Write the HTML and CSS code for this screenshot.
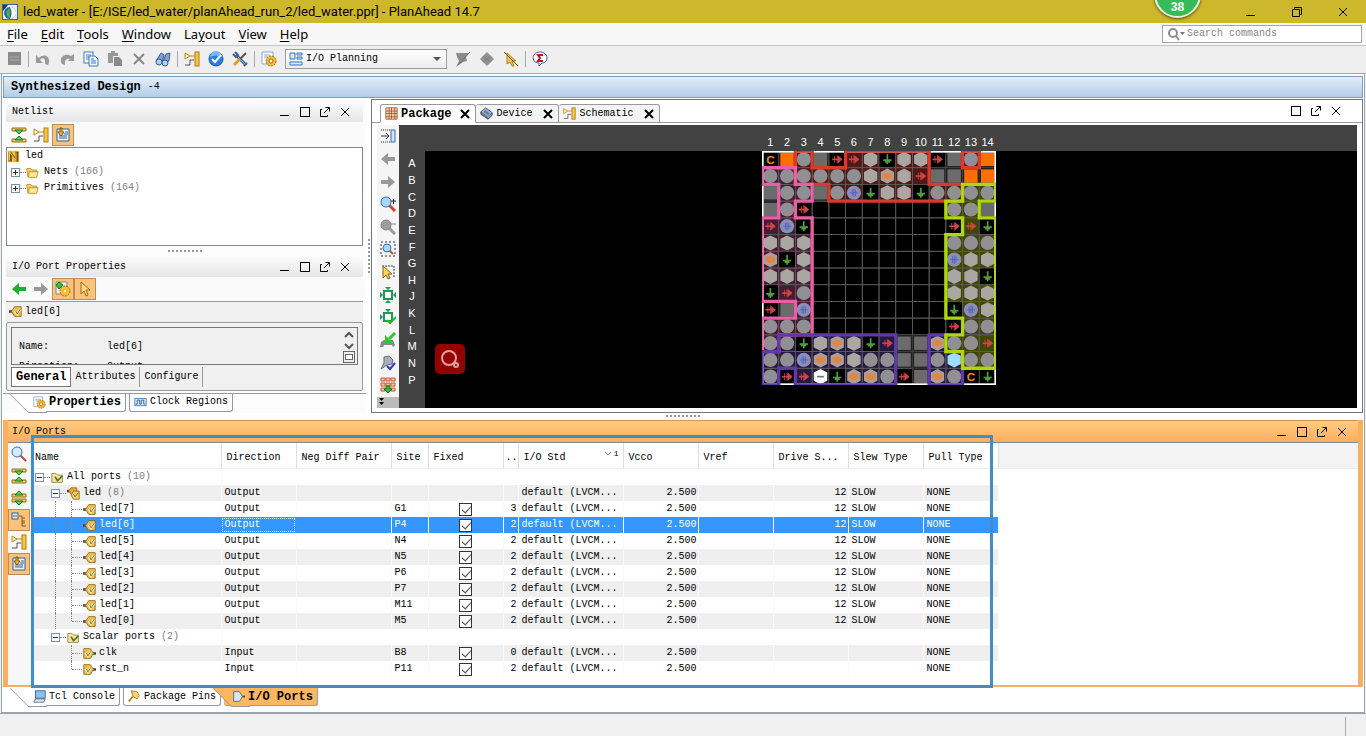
FILE: index.html
```html
<!DOCTYPE html>
<html lang="en">
<head>
  <meta charset="UTF-8">
  <title>led_water - PlanAhead 14.7</title>
  <link rel="stylesheet" href="styles.css">
</head>
<body>

<svg class="sprite" aria-hidden="true">
  <symbol id="i-app" viewBox="0 0 16 16"><rect width="16" height="16" fill="#3b62b5"/><rect x="1" y="1" width="14" height="14" fill="#e9f0fa"/><circle cx="8" cy="9" r="6" fill="#2a62b8"/><path d="M8 3a6 6 0 0 1 0 12c2-4 2-8 0-12z" fill="#fff"/><path d="M8 4c-5 2-5 8 0 10z" fill="#47b04b"/><path d="M1 1h5L1 7z" fill="#1b3670"/></symbol>
  <symbol id="i-save" viewBox="0 0 16 16"><rect x="2" y="1" width="13" height="13" fill="#8b8b8b"/><path d="M4 6h9M4 9h9" stroke="#a9a9a9"/></symbol>
  <symbol id="i-undo" viewBox="0 0 16 16"><path d="M1 4v8h7L5 9c2-3 6-2 5 4l3 1c4-7-3-13-9-7z" fill="#9a9a9a"/></symbol>
  <symbol id="i-redo" viewBox="0 0 16 16"><path d="M15 3v7H9l2-2c-3-1-6 1-5 6l-3-1C-1 7 6 1 12 5z" fill="#9a9a9a"/></symbol>
  <symbol id="i-copy" viewBox="0 0 16 16"><rect x="1" y="1" width="9" height="11" fill="#fff" stroke="#3d7cc0"/><path d="M3 4h5M3 6h5M3 8h5" stroke="#3d7cc0"/><path d="M6 5h6l3 3v7H6z" fill="#eef6ff" stroke="#3d7cc0"/><path d="M8 8h3M8 10h5M8 12h5" stroke="#3d7cc0"/></symbol>
  <symbol id="i-paste" viewBox="0 0 16 16"><path d="M1 2h3V0h4v2h3v3H6v7H1z" fill="#989898"/><path d="M7 6h5l3 3v6H7z" fill="#8a8a8a"/></symbol>
  <symbol id="i-delete" viewBox="0 0 16 16"><path d="M3 3l10 10M13 3L3 13" stroke="#888" stroke-width="2"/></symbol>
  <symbol id="i-find" viewBox="0 0 16 16"><path d="M1 10l5-8 3 2-2 8zM8 11l3-8 4-1-1 8z" fill="#7ea4cf" stroke="#385f93"/><circle cx="4" cy="11" r="3" fill="#a8d2ef" stroke="#385f93"/><circle cx="10" cy="12" r="3" fill="#a8d2ef" stroke="#385f93"/></symbol>
  <symbol id="i-schem" viewBox="0 0 16 16"><path d="M1 2l5 3-5 3zM6 5h5" fill="#fff3c4" stroke="#c48a17"/><path d="M1 14h5V9h4" fill="none" stroke="#555"/><rect x="11" y="1" width="4" height="14" fill="#f7c640" stroke="#b07a10"/></symbol>
  <symbol id="i-check" viewBox="0 0 16 16"><circle cx="8" cy="8" r="7" fill="#2a7fe0" stroke="#155aa8"/><path d="M2 6a6 6 0 0 1 12 0q-6-3-12 0" fill="#7ab6f4"/><path d="M4 8l3 3 6-7" fill="none" stroke="#fff" stroke-width="2"/></symbol>
  <symbol id="i-tools" viewBox="0 0 16 16"><path d="M4 4l9 9" stroke="#38618f" stroke-width="3"/><path d="M4 4l9 9" stroke="#8fc0ea"/><path d="M1 3l3 3 2-2-3-3M12 15l3-3" fill="none" stroke="#38618f" stroke-width="2"/><path d="M14 2L8 8" stroke="#555" stroke-width="2"/><path d="M8 8l-6 6" stroke="#e99b1c" stroke-width="3"/></symbol>
  <symbol id="i-gear" viewBox="0 0 16 16"><path d="M1 1h11v12H1z" fill="#fff" stroke="#8aa6c8"/><path d="M3 4h6M3 6h4" stroke="#8aa6c8"/><circle cx="10" cy="10" r="5" fill="#f4bd34"/><circle cx="10" cy="10" r="5" fill="none" stroke="#a26c0b" stroke-dasharray="2 1"/><circle cx="10" cy="10" r="2" fill="#fff" stroke="#a26c0b"/></symbol>
  <symbol id="i-prop" viewBox="0 0 16 16"><path d="M1 1h11v12H1z" fill="#eef" stroke="#888"/><path d="M1 4l3-3 4 3-4 4z" fill="#3ac23a" stroke="#14741a"/><circle cx="10" cy="10" r="5" fill="#f4bd34" stroke="#a26c0b" stroke-dasharray="2 1"/><circle cx="10" cy="10" r="1" fill="#fff"/></symbol>
  <symbol id="i-layout" viewBox="0 0 16 16"><path d="M2 2h5v6H2zM9 2h5v2H9zM9 6h5v2H9zM2 11h12v3H2z" fill="#dcebfa" stroke="#3974b8"/></symbol>
  <symbol id="i-leaf" viewBox="0 0 16 16"><path d="M1 2h13l-3 4 1 4-4 1-7 5 3-6-2-4z" fill="#8c8c8c"/><path d="M15 1L3 14" stroke="#6d6d6d"/></symbol>
  <symbol id="i-diamond" viewBox="0 0 16 16"><path d="M8 1l7 7-7 7-7-7z" fill="#929292"/><path d="M4 5l8 6M12 5l-8 6" stroke="#7c7c7c"/></symbol>
  <symbol id="i-nocursor" viewBox="0 0 16 16"><path d="M4 2l9 8-4 0 2 5-2 0-2-4-3 2z" fill="#f6c34f" stroke="#b07f22"/><path d="M1 1l14 14" stroke="#6d5520"/></symbol>
  <symbol id="i-sigma" viewBox="0 0 16 16"><path d="M8 1c9 0 9 11 2 11l-3 3v-3C-1 12-1 1 8 1z" fill="#fff" stroke="#4359b0"/><path d="M11 4H6l2 3-2 3h5" fill="none" stroke="#c8102e" stroke-width="2"/></symbol>
  <symbol id="i-collapse" viewBox="0 0 16 16"><path d="M1 1h14v3H1zM1 12h14v3H1z" fill="#f5cb5c" stroke="#94701c"/><path d="M4 3h8L8 7zM4 13h8L8 9z" fill="#5fd25f" stroke="#14741a"/></symbol>
  <symbol id="i-expand" viewBox="0 0 16 16"><path d="M1 4h14v3H1zM1 9h14v3H1z" fill="#f5cb5c" stroke="#94701c"/><path d="M4 5h8L8 1zM4 11h8l-4 4z" fill="#5fd25f" stroke="#14741a"/></symbol>
  <symbol id="i-sheet" viewBox="0 0 16 16"><path d="M2 2h12v12H2z" fill="#e6f2ff" stroke="#35618f"/><path d="M10 5h3M4 9h8M4 11h8M9 7h4" stroke="#35618f"/><path d="M5 1h2v4h2L6 9 3 5h2z" fill="#f4b52c" stroke="#7b5510"/></symbol>
  <symbol id="i-tree" viewBox="0 0 16 16"><rect x="1" y="1" width="6" height="6" fill="#dfeefe" stroke="#35618f"/><path d="M2 4h4M8 4h3v10h4M11 6h3M11 9h3M11 11h3" fill="none" stroke="#7b5a1a"/></symbol>
  <symbol id="i-netlist" viewBox="0 0 16 16"><path d="M1 1h14v14H1z" fill="#efc23c"/><path d="M2 14V2h3l5 7V2h4v12h-3L6 7v7z" fill="#7c5306"/><path d="M3 13V2l8 11V3" fill="none" stroke="#ffe48a"/></symbol>
  <symbol id="i-folder" viewBox="0 0 16 16"><path d="M1 3h5l2 2h5v8H2z" fill="#f4cf66" stroke="#b98a1d"/><path d="M4 7h11l-2 7H3z" fill="#ffe89f" stroke="#b98a1d"/></symbol>
  <symbol id="i-pfolder" viewBox="0 0 16 16"><path d="M1 3h5l2 2h6v9H1z" fill="#f6e6a6" stroke="#8a7a3a"/><path d="M5 7l3 5 6-6" fill="none" stroke="#5d6a1c" stroke-width="2"/></symbol>
  <symbol id="i-out" viewBox="0 0 16 16"><path d="M0 8h4" stroke="#444" stroke-width="3"/><path d="M3 8l4-6h8v12H7z" fill="#f0bd4a" stroke="#8a6210"/><path d="M7 7l3 4 4-6" fill="none" stroke="#fff6cf" stroke-width="3"/><path d="M8 7l2 4 4-6" fill="none" stroke="#6d4c05"/></symbol>
  <symbol id="i-in" viewBox="0 0 16 16"><path d="M12 8h4" stroke="#444" stroke-width="3"/><path d="M13 8L9 2H1v12h8z" fill="#f0bd4a" stroke="#8a6210"/><path d="M3 7l3 4 4-6" fill="none" stroke="#fff6cf" stroke-width="3"/><path d="M4 7l2 4 4-6" fill="none" stroke="#6d4c05"/></symbol>
  <symbol id="i-bus" viewBox="0 0 16 16"><path d="M0 5h4" stroke="#333" stroke-width="3"/><path d="M2 5l3-4h7v8H5z" fill="#e4ac33" stroke="#8a6210"/><path d="M5 10l3-5h7v10H8z" fill="#f7cf6a" stroke="#8a6210"/><path d="M8 9l2 3 4-5" fill="none" stroke="#6d4c05"/></symbol>
  <symbol id="i-port" viewBox="0 0 16 16"><path d="M11 8h5" stroke="#444" stroke-width="2"/><path d="M13 8L9 2H2v12h7z" fill="#d5e6f7" stroke="#4b5f78"/></symbol>
  <symbol id="i-clock" viewBox="0 0 16 16"><rect x="1" y="3" width="14" height="9" fill="#dcebfa" stroke="#3974b8"/><path d="M2 10h2V5h3v5h2V5h3v5h2" fill="none" stroke="#234f8a"/></symbol>
  <symbol id="i-left" viewBox="0 0 16 16"><path d="M1 8l7-6v4h7v4H8v4z" fill="currentColor"/></symbol>
  <symbol id="i-right" viewBox="0 0 16 16"><path d="M15 8L8 2v4H1v4h7v4z" fill="currentColor"/></symbol>
  <symbol id="i-cursor" viewBox="0 0 16 16"><path d="M4 1l9 8H9l2 5-2 1-2-5-3 3z" fill="#ffd98a" stroke="#a06a10"/></symbol>
  <symbol id="i-area" viewBox="0 0 16 16"><path d="M2 2h12v11" fill="none" stroke="#444" stroke-dasharray="2 1"/><path d="M3 2l9 8H8l2 4-2 1-2-4-3 3z" fill="#ffd35c" stroke="#8a6210"/></symbol>
  <symbol id="i-pkg" viewBox="0 0 16 16"><rect x="1" y="1" width="14" height="14" fill="#f1d2b5"/><path d="M1 1h14v14H1zM1 5h14M1 8h14M1 12h14M5 1v14M8 1v14M12 1v14" fill="none" stroke="#a4542c"/></symbol>
  <symbol id="i-device" viewBox="0 0 16 16"><path d="M1 6l6-5 8 6-5 6z" fill="#9fb4cf" stroke="#40495a"/><path d="M1 6v3l9 6v-2M10 15l5-5V7" fill="#6d7788" stroke="#40495a"/><path d="M4 6l3-2 5 4-2 2z" fill="#5d7fae"/></symbol>
  <symbol id="i-dock" viewBox="0 0 16 16"><path d="M1 2h9M1 14h9" stroke="#333" stroke-dasharray="1 1"/><path d="M1 8h8M6 5l3 3-3 3" fill="none" stroke="#333"/><rect x="11" y="2" width="4" height="12" fill="#cfe2f8" stroke="#3974b8"/></symbol>
  <symbol id="i-zoomin" viewBox="0 0 16 16"><path d="M9 9l6 6" stroke="#c8452e" stroke-width="3"/><circle cx="6" cy="6" r="5" fill="#a9d5f7" stroke="#2e73bd"/><path d="M11 5h5M13.500 3v5" stroke="#222"/></symbol>
  <symbol id="i-zoomout" viewBox="0 0 16 16"><path d="M9 9l6 6" stroke="#999" stroke-width="3"/><circle cx="6" cy="6" r="5" fill="#9d9d9d" stroke="#888"/><path d="M11 5h5" stroke="#888"/></symbol>
  <symbol id="i-zoomfit" viewBox="0 0 16 16"><rect x="1" y="1" width="14" height="14" fill="none" stroke="#334" stroke-dasharray="2 2"/><path d="M9 9l4 4" stroke="#c8452e" stroke-width="2"/><circle cx="7" cy="7" r="4" fill="#a9d5f7" stroke="#2e73bd"/></symbol>
  <symbol id="i-search" viewBox="0 0 16 16"><path d="M9 9l6 6" stroke="#b94a3a" stroke-width="2"/><circle cx="6" cy="6" r="5" fill="#d5ebfb" stroke="#2e73bd"/></symbol>
  <symbol id="i-chip" viewBox="0 0 16 16"><rect x="4" y="4" width="8" height="8" fill="#fff" stroke="#1c9a55" stroke-width="2"/><path d="M5 0h6L8 3zM5 16h6l-3-3zM0 5v6l3-3zM16 5v6l-3-3z" fill="#1c9a55"/></symbol>
  <symbol id="i-chipok" viewBox="0 0 16 16"><rect x="4" y="4" width="8" height="8" fill="#fff" stroke="#1c9a55" stroke-width="2"/><path d="M5 0h6L8 3zM0 5v6l3-3z" fill="#1c9a55"/><path d="M7 11l3 3 6-6" fill="none" stroke="#2eb52e" stroke-width="2"/></symbol>
  <symbol id="i-place" viewBox="0 0 16 16"><path d="M1 10l3-2h9l2 5-2 2-1-2H4l-1 2H0z" fill="#888"/><path d="M15 1L9 7" stroke="#2fc52f" stroke-width="3"/><path d="M5 3v8h8z" fill="#2fc52f"/></symbol>
  <symbol id="i-verify" viewBox="0 0 16 16"><path d="M4 2l5-1 4 4-1 4-5 1-6 4 3-6z" fill="#a9b0bb" stroke="#666e7a"/><path d="M7 11l3 3 5-6" fill="none" stroke="#3038b4" stroke-width="2"/></symbol>
  <symbol id="i-pins" viewBox="0 0 16 16"><path d="M1 1h4v3H1zM6 1h4v3H6zM11 1h4v3h-4zM1 6h4v3H1zM6 6h4v3H6zM11 6h4v3h-4zM1 11h4v3H1zM11 11h4v3h-4z" fill="#f3c5a3" stroke="#c55a35"/><path d="M8 16l-4-4h2V9h4v3h2z" fill="#2fb52f" stroke="#14741a"/></symbol>
  <symbol id="i-console" viewBox="0 0 16 16"><rect x="3" y="1" width="12" height="9" fill="#8fc0ef" stroke="#28598f"/><path d="M3 11h12l-2 4H1z" fill="#dfe8f2" stroke="#4b5f78"/></symbol>
  <symbol id="i-pinmag" viewBox="0 0 16 16"><path d="M6 8l-5 6" stroke="#b57a17" stroke-width="2"/><path d="M4 1l7 1 3 5-3 4-5-3z" fill="#ffd071" stroke="#a4701a"/></symbol>
  <symbol id="w-min" viewBox="0 0 12 12"><path d="M1 9.500h9" stroke="currentColor"/></symbol>
  <symbol id="w-max" viewBox="0 0 12 12"><rect x="1.500" y="1.500" width="9" height="9" fill="none" stroke="currentColor"/></symbol>
  <symbol id="w-float" viewBox="0 0 12 12"><path d="M3 3.500H1.500v7h7V9M5 7l5-5M6.500 1.500h4v4" fill="none" stroke="currentColor"/></symbol>
  <symbol id="w-close" viewBox="0 0 12 12"><path d="M2 2l8 8M10 2l-8 8" stroke="currentColor"/></symbol>
  <symbol id="w-restore" viewBox="0 0 12 12"><path d="M1.500 3.500h7v7h-7zM3.500 3.500v-2h7v7h-2" fill="none" stroke="currentColor"/></symbol>
</svg>

<header class="titlebar">
  <svg class="icon"><use href="#i-app"/></svg>
  <h1>led_water - [E:/ISE/led_water/planAhead_run_2/led_water.ppr] - PlanAhead 14.7</h1>
  <button aria-label="Minimize"><svg class="glyph"><use href="#w-min"/></svg></button>
  <button aria-label="Restore"><svg class="glyph"><use href="#w-restore"/></svg></button>
  <button aria-label="Close"><svg class="glyph"><use href="#w-close"/></svg></button>
  <div class="ball">38</div>
</header>

<nav class="menubar">
  <button><u>F</u>ile</button>
  <button><u>E</u>dit</button>
  <button><u>T</u>ools</button>
  <button><u>W</u>indow</button>
  <button>La<u>y</u>out</button>
  <button><u>V</u>iew</button>
  <button><u>H</u>elp</button>
  <label class="search">
    <svg viewBox="0 0 20 14" width="20" height="14"><circle cx="6" cy="6" r="4" fill="none" stroke="#8d8d8d" stroke-width="2"/><path d="M9 9l3 4" stroke="#8d8d8d" stroke-width="2"/><path d="M13 5h5l-2.500 3z" fill="#777"/></svg>
    <input type="text" placeholder="Search commands" aria-label="Search commands">
  </label>
</nav>

<div class="toolbar">
  <button class="tool" aria-label="Save"><svg class="icon"><use href="#i-save"/></svg></button>
  <span class="sep"></span>
  <button class="tool" aria-label="Undo"><svg class="icon"><use href="#i-undo"/></svg></button>
  <button class="tool" aria-label="Redo"><svg class="icon"><use href="#i-redo"/></svg></button>
  <button class="tool" aria-label="Copy"><svg class="icon"><use href="#i-copy"/></svg></button>
  <button class="tool" aria-label="Paste"><svg class="icon"><use href="#i-paste"/></svg></button>
  <button class="tool" aria-label="Delete"><svg class="icon"><use href="#i-delete"/></svg></button>
  <button class="tool" aria-label="Find"><svg class="icon"><use href="#i-find"/></svg></button>
  <span class="sep"></span>
  <button class="tool" aria-label="Schematic"><svg class="icon"><use href="#i-schem"/></svg></button>
  <button class="tool" aria-label="Check"><svg class="icon"><use href="#i-check"/></svg></button>
  <button class="tool" aria-label="Tools"><svg class="icon"><use href="#i-tools"/></svg></button>
  <span class="sep"></span>
  <button class="tool" aria-label="Settings"><svg class="icon"><use href="#i-gear"/></svg></button>
  <label class="layout-pick">
    <svg class="icon"><use href="#i-layout"/></svg>
    <select aria-label="Layout"><option>I/O Planning</option></select>
  </label>
  <button class="tool" aria-label="Highlight"><svg class="icon"><use href="#i-leaf"/></svg></button>
  <button class="tool" aria-label="Mark"><svg class="icon"><use href="#i-diamond"/></svg></button>
  <button class="tool" aria-label="Unselect"><svg class="icon"><use href="#i-nocursor"/></svg></button>
  <span class="sep"></span>
  <button class="tool" aria-label="Summary"><svg class="icon"><use href="#i-sigma"/></svg></button>
</div>

<main class="workspace">
  <div class="design-bar"><h2>Synthesized Design</h2><span>-4</span></div>

  <div class="upper">
    <div class="left">
      <section class="panel netlist">
        <div class="panel-head">
          <h3>Netlist</h3>
          <button aria-label="Minimize"><svg class="glyph"><use href="#w-min"/></svg></button>
          <button aria-label="Maximize"><svg class="glyph"><use href="#w-max"/></svg></button>
          <button aria-label="Float"><svg class="glyph"><use href="#w-float"/></svg></button>
          <button aria-label="Close"><svg class="glyph"><use href="#w-close"/></svg></button>
        </div>
        <div class="panel-tools">
          <button aria-label="Collapse all"><svg class="icon"><use href="#i-collapse"/></svg></button>
          <button aria-label="Schematic"><svg class="icon"><use href="#i-schem"/></svg></button>
          <button class="on" aria-label="Scroll to selected"><svg class="icon"><use href="#i-sheet"/></svg></button>
        </div>
        <ul class="tree">
          <li><svg class="small-icon"><use href="#i-netlist"/></svg>led</li>
          <li class="child"><button class="toggle plus" aria-label="Expand"></button><i class="stub"></i><svg class="small-icon"><use href="#i-folder"/></svg>Nets <em>(166)</em></li>
          <li class="child"><button class="toggle plus" aria-label="Expand"></button><i class="stub"></i><svg class="small-icon"><use href="#i-folder"/></svg>Primitives <em>(164)</em></li>
        </ul>
      </section>

      <div class="grip"></div>

      <section class="panel">
        <div class="panel-head">
          <h3>I/O Port Properties</h3>
          <button aria-label="Minimize"><svg class="glyph"><use href="#w-min"/></svg></button>
          <button aria-label="Maximize"><svg class="glyph"><use href="#w-max"/></svg></button>
          <button aria-label="Float"><svg class="glyph"><use href="#w-float"/></svg></button>
          <button aria-label="Close"><svg class="glyph"><use href="#w-close"/></svg></button>
        </div>
        <div class="panel-tools ruled">
          <button class="go" aria-label="Back"><svg class="icon"><use href="#i-left"/></svg></button>
          <button class="dim" aria-label="Forward"><svg class="icon"><use href="#i-right"/></svg></button>
          <button class="on" aria-label="Auto update"><svg class="icon"><use href="#i-prop"/></svg></button>
          <button class="on" aria-label="Select"><svg class="icon"><use href="#i-cursor"/></svg></button>
        </div>
        <div class="object"><svg class="small-icon"><use href="#i-out"/></svg>led[6]</div>
        <div class="props">
          <div class="props-view">
            <dl>
              <dt>Name:</dt><dd>led[6]</dd>
              <dt>Direction:</dt><dd>Output</dd>
            </dl>
            <div class="scroller">
              <svg viewBox="0 0 14 34" width="14" height="34"><path d="M3 8l4-4 4 4M3 15l4 4 4-4" fill="none" stroke="#555" stroke-width="2"/><rect x="1.500" y="22.500" width="11" height="11" fill="#eee" stroke="#666"/><rect x="3.500" y="25.500" width="7" height="5" fill="#fff" stroke="#666"/></svg>
            </div>
          </div>
          <div class="subtabs">
            <button class="active">General</button>
            <button>Attributes</button>
            <button>Configure</button>
          </div>
        </div>
      </section>

      <div class="foot-tabs">
        <button class="slant active"><svg class="small-icon"><use href="#i-gear"/></svg>Properties</button>
        <button><svg class="small-icon"><use href="#i-clock"/></svg>Clock Regions</button>
      </div>
    </div>

    <div class="grip vertical"></div>

    <section class="right">
      <div class="doc-tabs">
        <button class="active"><svg class="small-icon"><use href="#i-pkg"/></svg>Package<svg class="glyph bold"><use href="#w-close"/></svg></button>
        <button><svg class="small-icon"><use href="#i-device"/></svg>Device<svg class="glyph bold"><use href="#w-close"/></svg></button>
        <button><svg class="small-icon"><use href="#i-schem"/></svg>Schematic<svg class="glyph bold"><use href="#w-close"/></svg></button>
        <span class="fill"></span>
        <span class="doc-win">
          <button aria-label="Maximize"><svg class="glyph"><use href="#w-max"/></svg></button>
          <button aria-label="Float"><svg class="glyph"><use href="#w-float"/></svg></button>
          <button aria-label="Close"><svg class="glyph"><use href="#w-close"/></svg></button>
        </span>
      </div>
      <div class="doc">
        <div class="strip">
          <div class="strip-tools">
            <button aria-label="Dock"><svg class="icon"><use href="#i-dock"/></svg></button>
            <button class="dim" aria-label="Back"><svg class="icon"><use href="#i-left"/></svg></button>
            <button class="dim" aria-label="Forward"><svg class="icon"><use href="#i-right"/></svg></button>
            <button aria-label="Zoom in"><svg class="icon"><use href="#i-zoomin"/></svg></button>
            <button aria-label="Zoom out"><svg class="icon"><use href="#i-zoomout"/></svg></button>
            <button aria-label="Zoom fit"><svg class="icon"><use href="#i-zoomfit"/></svg></button>
            <button aria-label="Select area"><svg class="icon"><use href="#i-area"/></svg></button>
            <button aria-label="Chip"><svg class="icon"><use href="#i-chip"/></svg></button>
            <button aria-label="Check chip"><svg class="icon"><use href="#i-chipok"/></svg></button>
            <button aria-label="Place ports"><svg class="icon"><use href="#i-place"/></svg></button>
            <button aria-label="Verify"><svg class="icon"><use href="#i-verify"/></svg></button>
            <button aria-label="Pins"><svg class="icon"><use href="#i-pins"/></svg></button>
          </div>
          <button class="more" aria-label="More"><svg viewBox="0 0 6 8" width="6" height="8"><path d="M0 0h5L2.500 3zM0 4h5L2.500 7z"/></svg></button>
        </div>
        <div class="package-view">
          <div class="corner"></div>
          <div class="cols"><div class="col-labels" id="cols"></div></div>
          <div class="rows" id="rows"></div>
          <div class="canvas">
            <svg id="package" viewBox="0 0 280 280"></svg>
            <button class="lens" aria-label="Search image"><svg viewBox="0 0 20 20" width="20" height="20" fill="none" stroke="#dba0a0" stroke-width="2"><circle cx="9" cy="9" r="7"/><circle cx="16" cy="16" r="2"/></svg></button>
          </div>
        </div>
      </div>
    </section>
  </div>

  <div class="grip"></div>

  <section class="ports">
    <div class="panel-head">
      <h3>I/O Ports</h3>
      <button aria-label="Minimize"><svg class="glyph"><use href="#w-min"/></svg></button>
      <button aria-label="Maximize"><svg class="glyph"><use href="#w-max"/></svg></button>
      <button aria-label="Float"><svg class="glyph"><use href="#w-float"/></svg></button>
      <button aria-label="Close"><svg class="glyph"><use href="#w-close"/></svg></button>
    </div>
    <div class="ports-body">
      <div class="ports-tools">
        <button aria-label="Search"><svg class="icon"><use href="#i-search"/></svg></button>
        <button aria-label="Collapse all"><svg class="icon"><use href="#i-collapse"/></svg></button>
        <button aria-label="Expand all"><svg class="icon"><use href="#i-expand"/></svg></button>
        <button class="on" aria-label="Group"><svg class="icon"><use href="#i-tree"/></svg></button>
        <button aria-label="Schematic"><svg class="icon"><use href="#i-schem"/></svg></button>
        <button class="on" aria-label="Scroll to selected"><svg class="icon"><use href="#i-sheet"/></svg></button>
      </div>
      <table>
        <colgroup>
          <col class="c-name"><col class="c-mid"><col class="c-neg"><col class="c-site"><col class="c-mid"><col class="c-bank">
          <col class="c-std"><col class="c-mid"><col class="c-mid"><col class="c-mid"><col class="c-mid"><col class="c-mid"><col>
        </colgroup>
        <thead>
          <tr>
            <th class="first">Name</th><th>Direction</th><th>Neg Diff Pair</th><th>Site</th><th>Fixed</th><th class="bank">..</th>
            <th>I/O Std<span class="sort"><svg viewBox="0 0 8 6" width="8" height="6"><path d="M1 1l3 3 3-3" fill="none" stroke="#888"/></svg><sup>1</sup></span></th>
            <th>Vcco</th><th>Vref</th><th>Drive S...</th><th>Slew Type</th><th>Pull Type</th><th class="rest"></th>
          </tr>
        </thead>
        <tbody id="ports"></tbody>
      </table>
    </div>
    <div class="marker"></div>
  </section>

  <div class="foot-tabs bottom">
    <button class="slant"><svg class="small-icon"><use href="#i-console"/></svg>Tcl Console</button>
    <button><svg class="small-icon"><use href="#i-pinmag"/></svg>Package Pins</button>
    <button class="slant hot"><svg class="small-icon"><use href="#i-port"/></svg>I/O Ports</button>
  </div>
</main>

<footer class="statusbar"></footer>

<script src="script.js"></script>
</body>
</html>
```
FILE: styles.css
```css
* {
  box-sizing: border-box;
}

body {
  margin: 0;
  min-height: 100vh;
  display: flex;
  flex-direction: column;
  background: #f0f0f0;
  color: #000;
  font: 10px/16px "Liberation Mono", monospace;
}

button, input, select {
  font: inherit;
  color: inherit;
  background: none;
  border: 0;
  padding: 0;
  margin: 0;
}

h1, h2, h3, ul, dl, dd {
  margin: 0;
  padding: 0;
  font: inherit;
  list-style: none;
}

svg {
  display: block;
  flex: none;
}

.sprite {
  position: absolute;
  width: 0;
  height: 0;
}

.icon {
  width: 16px;
  height: 16px;
}

.small-icon {
  width: 13px;
  height: 13px;
}

.glyph {
  width: 12px;
  height: 12px;
}

.glyph.bold {
  stroke-width: 2;
}

/* title bar */
.titlebar {
  height: 23px;
  display: flex;
  align-items: center;
  background: #cdb72b;
  padding-left: 2px;
  position: relative;
}

.titlebar h1 {
  flex: 1;
  margin-left: 5px;
  font: 13px/20px Roboto, sans-serif;
  white-space: nowrap;
}

.titlebar button {
  width: 46px;
  height: 20px;
  display: flex;
  align-items: center;
  justify-content: center;
}

.ball {
  position: absolute;
  right: 165px;
  top: -29px;
  width: 47px;
  height: 47px;
  border-radius: 50%;
  border: 2px solid #e3f3d8;
  background: #35bb58;
  box-shadow: 0 1px 3px rgba(0, 0, 0, 0.6);
  color: #fff;
  font: bold 12px/14px "Liberation Sans", sans-serif;
  text-align: center;
  padding-top: 27px;
  z-index: 2;
}

/* menu */
.menubar {
  height: 23px;
  display: flex;
  align-items: center;
  background: #f7f7f7;
  border-bottom: 1px solid #c6c6c6;
  padding: 0 4px 0 0;
  font: 13px/20px "Noto Sans", sans-serif;
}

.menubar button {
  padding: 0 6px 0 7px;
}

.menubar u {
  text-underline-offset: 2px;
}

.search {
  margin-left: auto;
  width: 200px;
  height: 18px;
  display: flex;
  align-items: center;
  background: #fff;
  border: 1px solid #a5a5a5;
  padding-left: 4px;
}

.search input {
  flex: 1;
  min-width: 0;
  font: 10px/16px "Liberation Mono", monospace;
  outline: 0;
}

.search input::placeholder {
  color: #888;
  opacity: 1;
}

/* main toolbar */
.toolbar {
  height: 28px;
  display: flex;
  align-items: center;
  background: #efefef;
  border-bottom: 1px solid #a6a6a6;
  padding: 0 0 1px 2px;
}

.tool {
  width: 24px;
  height: 24px;
  display: flex;
  align-items: center;
  justify-content: center;
}

.sep {
  width: 1px;
  height: 16px;
  background: #a9a9a9;
  margin: 0 2px;
}

.layout-pick {
  width: 162px;
  height: 20px;
  margin: 0 4px;
  display: flex;
  align-items: center;
  border: 1px solid #9c9c9c;
  background: linear-gradient(#fff, #ececec);
  padding: 0 5px 0 2px;
}

.layout-pick select {
  flex: 1;
  appearance: none;
  padding-left: 2px;
}

.layout-pick::after {
  content: "";
  border: 4px solid transparent;
  border-top-color: #555;
  border-bottom: 0;
}

/* workspace */
.workspace {
  flex: 1;
  display: flex;
  flex-direction: column;
  margin: 0 1px;
  padding: 2px 1px 4px;
  background: #fff;
  border: 1px solid #9aa4ad;
  border-top: 0;
}

.design-bar {
  height: 22px;
  display: flex;
  align-items: center;
  gap: 7px;
  padding-left: 7px;
  background: linear-gradient(#e4eefa, #b2cde8);
  border: 1px solid #7f9dbb;
  margin-bottom: 1px;
}

.design-bar h2 {
  font-size: 12px;
  font-weight: bold;
}

.upper {
  flex: 1;
  display: flex;
}

.left {
  width: 363px;
  display: flex;
  flex-direction: column;
  padding-top: 3px;
  background: #fcfcfc;
}

.panel {
  padding: 0 3px;
}

.netlist {
  flex: 1;
  display: flex;
  flex-direction: column;
}

.panel-head {
  height: 20px;
  display: flex;
  align-items: center;
  padding: 0 8px 0 6px;
  background: linear-gradient(#fbfbfb, #e6e6e8);
}

.panel-head h3 {
  flex: 1;
}

.panel-head button, .doc-win button {
  width: 20px;
  height: 18px;
  display: flex;
  align-items: center;
  justify-content: center;
}

.panel-tools {
  height: 25px;
  display: flex;
  align-items: center;
  padding-left: 2px;
  background: #fafafa;
}

.panel-tools.ruled {
  border-bottom: 1px solid #999;
}

.panel-tools button, .ports-tools button {
  width: 22px;
  height: 22px;
  display: flex;
  align-items: center;
  justify-content: center;
  border: 1px solid transparent;
}

.panel-tools .on, .ports-tools .on {
  background: #fbc27b;
  border-color: #c08c55;
}

.go {
  color: #1fae2a;
}

.dim {
  color: #999;
}

.tree {
  flex: 1;
  border: 1px solid #828790;
  background: #fff;
}

.tree li {
  display: flex;
  align-items: center;
  white-space: pre;
}

.tree li > .small-icon {
  margin-right: 5px;
}

.tree .child {
  padding-left: 4px;
}

em {
  font-style: normal;
  color: #808080;
}

.toggle {
  width: 9px;
  height: 9px;
  flex: none;
  border: 1px solid #7d8fa8;
  background: linear-gradient(#333, #333) center / 5px 1px no-repeat #f5f8fc;
}

.toggle.plus {
  background: linear-gradient(#333, #333) center / 5px 1px no-repeat, linear-gradient(#333, #333) center / 1px 5px no-repeat #f5f8fc;
}

.stub {
  width: 6px;
  flex: none;
  border-top: 1px dotted #888;
}

.grip {
  height: 7px;
  display: flex;
  align-items: center;
  justify-content: center;
}

.grip::before {
  content: "";
  width: 34px;
  height: 2px;
  background: repeating-linear-gradient(90deg, #999 0 2px, transparent 2px 4px);
}

.left > .grip {
  height: 11px;
}

.grip.vertical {
  width: 5px;
  height: auto;
}

.grip.vertical::before {
  width: 2px;
  height: 34px;
  background: repeating-linear-gradient(#999 0 2px, transparent 2px 4px);
}

.object {
  height: 20px;
  display: flex;
  align-items: center;
  gap: 3px;
  padding-left: 3px;
  background: #f0f0f0;
}

.props {
  margin-bottom: 2px;
  padding: 4px 4px 3px;
  background: #f0f0f0;
  border: 1px solid #999;
  border-radius: 2px;
}

.props-view {
  height: 38px;
  display: flex;
  justify-content: space-between;
  overflow: hidden;
  border: 1px solid #777;
}

.props-view dl {
  display: grid;
  grid-template-columns: 88px auto;
  grid-auto-rows: 20px;
  line-height: 20px;
  padding: 9px 0 0 7px;
}

.scroller {
  padding: 1px 1px 0 0;
}

.subtabs {
  display: flex;
  margin-top: 2px;
}

.subtabs button {
  height: 20px;
  padding: 0 4px;
  border-right: 1px solid #999;
}

.subtabs .active {
  background: #fff;
  border: 1px solid #777;
  font-weight: bold;
  font-size: 12px;
}

/* tabs below a panel */
.foot-tabs {
  height: 20px;
  display: flex;
  gap: 3px;
  padding-left: 26px;
  border-top: 1px solid #999;
}

.foot-tabs button {
  height: 18px;
  display: flex;
  align-items: center;
  gap: 3px;
  padding: 0 4px;
  background: #fff;
  border: solid #999;
  border-width: 0 1px 1px;
  border-radius: 0 0 3px 3px;
  position: relative;
}

.foot-tabs .active, .foot-tabs .hot {
  font-size: 12px;
  font-weight: bold;
}

.foot-tabs .slant {
  border-left: 0;
}

.foot-tabs .slant::before {
  content: "";
  position: absolute;
  left: -10px;
  top: 0;
  width: 18px;
  height: 18px;
  background: inherit;
  border: solid #999;
  border-width: 0 0 1px 1px;
  transform: skewX(45deg);
}

.foot-tabs .slant > svg {
  position: relative;
}

.foot-tabs.bottom {
  border-top-color: #fff;
  margin-bottom: 1px;
}

.foot-tabs .hot {
  background: #fdb662;
  padding-left: 8px;
}

.foot-tabs .hot::before {
  left: -2px;
}

/* package window */
.right {
  flex: 1;
  min-width: 0;
  display: flex;
  flex-direction: column;
  border: 1px solid #6d7780;
}

.doc-tabs {
  height: 23px;
  display: flex;
  align-items: flex-end;
}

.doc-tabs::before {
  content: "";
  width: 8px;
  align-self: stretch;
  border-bottom: 1px solid #999;
}

.doc-tabs > button {
  height: 19px;
  display: flex;
  align-items: center;
  gap: 3px;
  padding: 0 4px;
  background: #f4f4f4;
  border: 1px solid #999;
  border-left-width: 0;
  border-radius: 3px 3px 0 0;
}

.doc-tabs > button .bold {
  margin-left: 7px;
}

.doc-tabs > .active {
  background: #fff;
  border-left-width: 1px;
  border-bottom-color: #fff;
  font-size: 12px;
  font-weight: bold;
}

.doc-tabs > .active .bold {
  margin-left: 5px;
}

.fill, .doc-win {
  align-self: stretch;
  border-bottom: 1px solid #999;
}

.fill {
  flex: 1;
}

.doc-win {
  display: flex;
  align-items: center;
  padding-right: 16px;
}

.doc {
  flex: 1;
  display: flex;
  padding: 2px 5px 4px;
}

.strip {
  width: 22px;
  display: flex;
  flex-direction: column;
  background: #f5f5f5;
}

.strip-tools {
  flex: 1;
  display: flex;
  flex-direction: column;
  align-items: center;
  justify-content: space-around;
}

.more {
  height: 11px;
  padding-left: 2px;
  background: #bbb;
}

.package-view {
  flex: 1;
  display: grid;
  grid-template-columns: 26px 1fr;
  grid-template-rows: 26px 1fr;
  background: #424242;
  color: #fff;
  font: 11px/14px "Liberation Sans", sans-serif;
}

.cols, .canvas {
  display: flex;
  justify-content: center;
  padding-right: 24px;
}

.cols {
  align-items: flex-end;
  padding-bottom: 2px;
}

.col-labels {
  flex: 0 1 234px;
  display: grid;
  grid-template-columns: repeat(14, 1fr);
  text-align: center;
}

.rows {
  display: grid;
  grid-template-rows: repeat(14, 1fr);
  height: 237px;
  padding-top: 4px;
  align-items: center;
  text-align: center;
}

.canvas {
  background: #000;
  align-items: flex-start;
  position: relative;
}

#package {
  width: 234px;
  height: 234px;
}

.lens {
  position: absolute;
  left: 10px;
  bottom: 34px;
  width: 30px;
  height: 30px;
  padding: 5px;
  border-radius: 5px;
  background: #970000;
}

/* ports */
.ports {
  position: relative;
  border: solid #fbae5c;
  border-width: 0 5px 2px;
}

.ports .panel-head {
  height: 22px;
  padding: 1px 6px 0 4px;
  background: linear-gradient(#ffcb80, #fdae5e);
  border-top: 1px solid #c99661;
}

.ports-body {
  display: flex;
  background: #fff;
  border-top: 1px solid #888;
}

.ports-tools {
  width: 26px;
  background: #f7f7f7;
}

table {
  flex: 1;
  width: 100%;
  table-layout: fixed;
  border-collapse: collapse;
  margin-bottom: 8px;
}

.c-name { width: 187px; }
.c-mid { width: 75px; }
.c-neg { width: 95px; }
.c-site { width: 37px; }
.c-bank { width: 15px; }
.c-std { width: 105px; }

th {
  height: 26px;
  padding: 5px 0 0 5px;
  text-align: left;
  font-weight: normal;
  white-space: nowrap;
  border-left: 1px solid #ddd;
  border-bottom: 1px solid #eee;
}

th.first, td.first {
  border-left: 0;
  padding-left: 1px;
}

th.bank {
  padding-left: 2px;
}

th.rest {
  background: #f3f3f3;
}

.sort {
  float: right;
  display: flex;
  align-items: center;
  gap: 2px;
  padding-right: 4px;
}

sup {
  font-size: 8px;
  line-height: 8px;
}

td {
  height: 16px;
  padding: 0 1px 0 3px;
  line-height: 16px;
  white-space: nowrap;
  border-left: 1px solid #fafafa;
}

tbody tr:nth-child(even) td {
  background: #efefef;
}

tbody tr.selected td {
  background: #3397fd;
  border-color: #fff;
  color: #fff;
}

tbody tr td.rest {
  background: #fff !important;
}

tbody tr.selected td:nth-child(-n+3) {
  border-color: #3397fd;
}

tbody tr.selected td:nth-child(2) {
  outline: 1px dotted #fff;
  outline-offset: -2px;
}

.num {
  text-align: right;
}

td.center {
  padding: 0;
}

.center input {
  display: block;
  appearance: none;
  width: 13px;
  height: 13px;
  margin: 1px auto;
  border: 1px solid #333;
  background: #fff;
}

.center input::after {
  content: "";
  display: block;
  width: 4px;
  height: 8px;
  margin: 0 0 0 4px;
  border: solid #444;
  border-width: 0 1px 1px 0;
  transform: rotate(42deg);
}

.name {
  display: flex;
  align-items: center;
  height: 16px;
  white-space: pre;
}

.name .small-icon {
  margin-right: 3px;
}

.slot {
  width: 16px;
  height: 16px;
  flex: none;
  display: flex;
  align-items: center;
}

.slot.line, .slot.leaf {
  padding-left: 4px;
}

.slot.line::before, .slot.leaf::before {
  content: "";
  height: 16px;
  border-left: 1px dotted #888;
}

.slot.last::before {
  height: 8px;
  align-self: flex-start;
}

.slot.leaf .stub {
  width: 10px;
}

/* frame over the port list */
.marker {
  position: absolute;
  left: 23px;
  top: 15px;
  width: 962px;
  bottom: -3px;
  border: 3px solid #3f8dcb;
  pointer-events: none;
}

.statusbar {
  height: 23px;
  background: #f0f0f0;
  border-top: 1px solid #a0a0a0;
  padding: 3px 20px 0 0;
}

.statusbar::after {
  content: "";
  display: block;
  height: 19px;
  border-right: 1px solid #aaa;
}
```
FILE: script.js
```js
// o ball, h hexagon, O used hexagon, b clock ball, X gray, S orange, C config,
// v power, g ground, B and W selected, . nothing
const grid = [
  'CSoXvvhghhvXoS',
  'oooooohOhvXXSS',
  'XooXobghhgoooo',
  'Xov........ooX',
  'vbg........vvg',
  'hhh........ooo',
  'Ogh........bhh',
  'hhh........hhg',
  'gvo........hhh',
  'vXb........gbh',
  'ooo........voo',
  'ooghOhgvXXOoov',
  'oobOOhooXXoBoo',
  'ovvWgOOovXOoCg'
];

const banks = [
  {
    line: '#d83a2c',
    fill: '#501915',
    shapes: ['2,0 3,0 3,1 5,1 5,0 10,0 10,2 12,2 12,3 4,3 4,2 2,2', '12,0 13,0 13,1 12,1']
  },
  {
    line: '#e85fa6',
    fill: '#471c33',
    shapes: ['0,1 2,1 2,2 3,2 3,3 2,3 2,4 3,4 3,11 1,11 1,12 0,12 0,10 2,10 2,9 0,9 0,4 1,4 1,2 0,2']
  },
  {
    line: '#5e3aa6',
    fill: '#251942',
    shapes: ['1,11 8,11 8,14 2,14 2,13 1,13 1,14 0,14 0,12 1,12', '10,11 11,11 11,12 12,12 12,14 10,14']
  },
  {
    line: '#aed613',
    fill: '#414600',
    shapes: ['12,2 14,2 14,3 13,3 13,4 14,4 14,13 12,13 12,12 11,12 11,11 12,11 12,10 11,10 11,5 12,5 12,4 11,4 11,3 12,3']
  }
];

const hex = fill => `<path d="M10 1l8 4v10l-8 4-8-4V5z" fill="${fill}"/>`;
const ball = fill => `<circle cx="10" cy="10" r="8.500" fill="${fill}"/>`;
const power = color => `<path d="M4 10h10" stroke="${color}" stroke-width="2"/><path d="M7 6v8M10 5v10M11 6l5 4-5 4z" stroke="${color}" fill="${color}"/>`;

const shapes = {
  o: ball('#8f8f94'),
  h: hex('#aaa6a2'),
  O: hex('#aaa09a') + '<ellipse cx="10" cy="10" rx="6" ry="4" fill="#e08543"/>',
  b: ball('#8b8fb5') + '<path d="M5 10h10M8 6v8M10 5v10M12 6v8" stroke="#4c5fc4"/>',
  X: '<rect x="1" y="1" width="18" height="18" fill="#6b6b6b" stroke="#222" stroke-width="2"/>',
  S: '<rect x="1" y="1" width="18" height="18" fill="#ff6f00" stroke="#222" stroke-width="2"/>',
  C: '<text x="10" y="15" text-anchor="middle" font-size="14" font-weight="bold" fill="#f0861c">C</text>',
  v: power('#cf4545'),
  g: '<path d="M10 4v8M5 11h10M7 13h6M9 15h2" stroke="#4e9f3b" stroke-width="2"/>',
  B: hex('#9fdcff'),
  W: hex('#fff') + '<path d="M3 5h14v10H3z" fill="#fff"/><path d="M6 10h8" stroke="#6b6b9c" stroke-width="2"/>',
  '.': ''
};

const scaled = points => points.split(' ').map(p => p.split(',').map(n => n * 20).join(',')).join(' ');

let drawing = '';
banks.forEach(bank => {
  bank.shapes.forEach(p => drawing += `<polygon points="${scaled(p)}" fill="${bank.fill}"/>`);
});
grid.forEach((row, y) => {
  [...row].forEach((code, x) => {
    const black = 'gC'.includes(code) ? '<rect width="20" height="20" fill="#000"/>' : '';
    drawing += `<g transform="translate(${x * 20} ${y * 20})">${black}<rect width="20" height="20" fill="none" stroke="#5a5a5a" stroke-width="1"/>${shapes[code]}</g>`;
  });
});
drawing += '<rect x="1" y="1" width="278" height="278" fill="none" stroke="#fff" stroke-width="2"/>';
banks.forEach(bank => {
  bank.shapes.forEach(p => drawing += `<polygon points="${scaled(p)}" fill="none" stroke="${bank.line}" stroke-width="4"/>`);
});
document.getElementById('package').innerHTML = drawing;

let numbers = '';
for (let i = 1; i <= 14; i++) numbers += `<span>${i}</span>`;
document.getElementById('cols').innerHTML = numbers;
document.getElementById('rows').innerHTML = [...'ABCDEFGHJKLMNP'].map(c => `<span>${c}</span>`).join('');

// name, depth, icon, direction, site, bank, drive
const ports = [
  ['All ports <em>(10)</em>', 0, 'pfolder'],
  ['led <em>(8)</em>', 1, 'bus', 'Output', '', '', 12],
  ['led[7]', 2, 'out', 'Output', 'G1', 3, 12],
  ['led[6]', 2, 'out', 'Output', 'P4', 2, 12],
  ['led[5]', 2, 'out', 'Output', 'N4', 2, 12],
  ['led[4]', 2, 'out', 'Output', 'N5', 2, 12],
  ['led[3]', 2, 'out', 'Output', 'P6', 2, 12],
  ['led[2]', 2, 'out', 'Output', 'P7', 2, 12],
  ['led[1]', 2, 'out', 'Output', 'M11', 2, 12],
  ['led[0]', 2, 'out', 'Output', 'M5', 2, 12],
  ['Scalar ports <em>(2)</em>', 1, 'pfolder'],
  ['clk', 2, 'in', 'Input', 'B8', 0, ''],
  ['rst_n', 2, 'in', 'Input', 'P11', 2, '']
];

const toggle = '<span class="slot"><button class="toggle" aria-label="Collapse"></button><i class="stub"></i></span>';

document.getElementById('ports').innerHTML = ports.map(([name, depth, icon, dir, site, bank, drive]) => {
  const last = name === 'led[0]' || name === 'rst_n';
  let lead = '';
  if (depth > 0) lead += '<span class="slot"></span>';
  if (depth < 2) lead += toggle;
  else lead += `<span class="slot ${icon === 'out' ? 'line' : ''}"></span><span class="slot leaf ${last ? 'last' : ''}"><i class="stub"></i></span>`;
  const label = `<td class="first"><div class="name">${lead}<svg class="small-icon"><use href="#i-${icon}"/></svg>${name}</div></td>`;
  if (!dir) return `<tr>${label}<td colspan="12"></td></tr>`;
  const fixed = site ? `<input type="checkbox" checked aria-label="${name} fixed">` : '';
  return `<tr class="${name === 'led[6]' ? 'selected' : ''}">${label}<td>${dir}</td><td></td><td>${site}</td><td class="center">${fixed}</td>
    <td class="num">${bank}</td><td>default (LVCM...</td><td class="num">2.500</td><td></td><td class="num">${drive}</td>
    <td>${drive ? 'SLOW' : ''}</td><td>NONE</td><td class="rest"></td></tr>`;
}).join('');
```
